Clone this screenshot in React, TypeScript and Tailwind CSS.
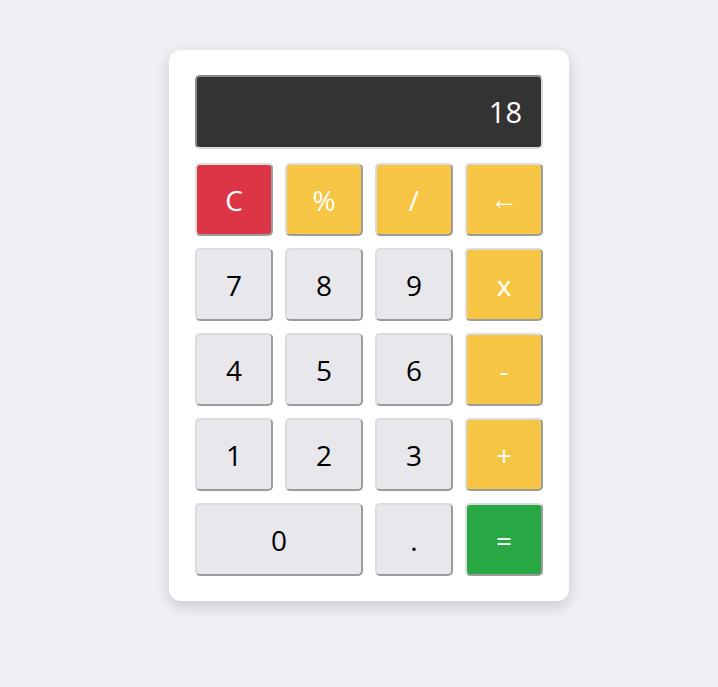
import { useState } from 'react'

type Key = {
  label: string
  kind: 'num' | 'op' | 'clear' | 'eq'
  wide?: boolean
}

const keys: Key[] = [
  { label: 'C', kind: 'clear' },
  { label: '%', kind: 'op' },
  { label: '/', kind: 'op' },
  { label: '←', kind: 'op' },
  { label: '7', kind: 'num' },
  { label: '8', kind: 'num' },
  { label: '9', kind: 'num' },
  { label: 'x', kind: 'op' },
  { label: '4', kind: 'num' },
  { label: '5', kind: 'num' },
  { label: '6', kind: 'num' },
  { label: '-', kind: 'op' },
  { label: '1', kind: 'num' },
  { label: '2', kind: 'num' },
  { label: '3', kind: 'num' },
  { label: '+', kind: 'op' },
  { label: '0', kind: 'num', wide: true },
  { label: '.', kind: 'num' },
  { label: '=', kind: 'eq' },
]

const kindStyles: Record<Key['kind'], string> = {
  num: 'bg-[#e8e7ec] text-black',
  op: 'bg-[#f7c544] text-white',
  clear: 'bg-[#dc3545] text-white',
  eq: 'bg-[#28a745] text-white',
}

export default function App() {
  const [value, setValue] = useState('18')

  function press(k: Key) {
    if (k.label === 'C') setValue('')
    else if (k.label === '←') setValue((v) => v.slice(0, -1))
    else if (k.label === '=') {
      try {
        const expr = value.replace(/x/g, '*')
        // eslint-disable-next-line no-new-func
        setValue(String(Function(`return (${expr})`)()))
      } catch {
        setValue('Error')
      }
    } else setValue((v) => v + k.label)
  }

  return (
    <div
      className="min-h-screen bg-[#eff0f4] pt-[50px] pl-[169px]"
      style={{ fontFamily: '"Open Sans", "Noto Sans", sans-serif' }}
    >
      <div className="w-[400px] rounded-xl bg-white px-[26px] py-[25px] shadow-[0_5px_15px_rgba(0,0,0,0.16)]">
        <div className="mb-[14px] flex h-[74px] items-center justify-end rounded-[5px] border-2 border-t-[#8a8a8a] border-l-[#8a8a8a] border-r-[#dadada] border-b-[#dadada] bg-[#333333] pr-[19px] text-[29px] text-white">
          {value}
        </div>
        <div className="grid grid-cols-4 gap-x-[12px] gap-y-[12px]">
          {keys.map((k) => (
            <button
              key={k.label}
              onClick={() => press(k)}
              className={`flex h-[73px] items-center justify-center rounded-[5px] border-2 border-t-[#dcdcdc] border-l-[#dcdcdc] border-r-[#9c9c9c] border-b-[#9c9c9c] text-[28px] leading-none ${kindStyles[k.kind]} ${k.wide ? 'col-span-2' : ''}`}
            >
              {k.label === '←' ? <span className="font-['Liberation_Sans'] text-[28px]">←</span> : k.label}
            </button>
          ))}
        </div>
      </div>
    </div>
  )
}
